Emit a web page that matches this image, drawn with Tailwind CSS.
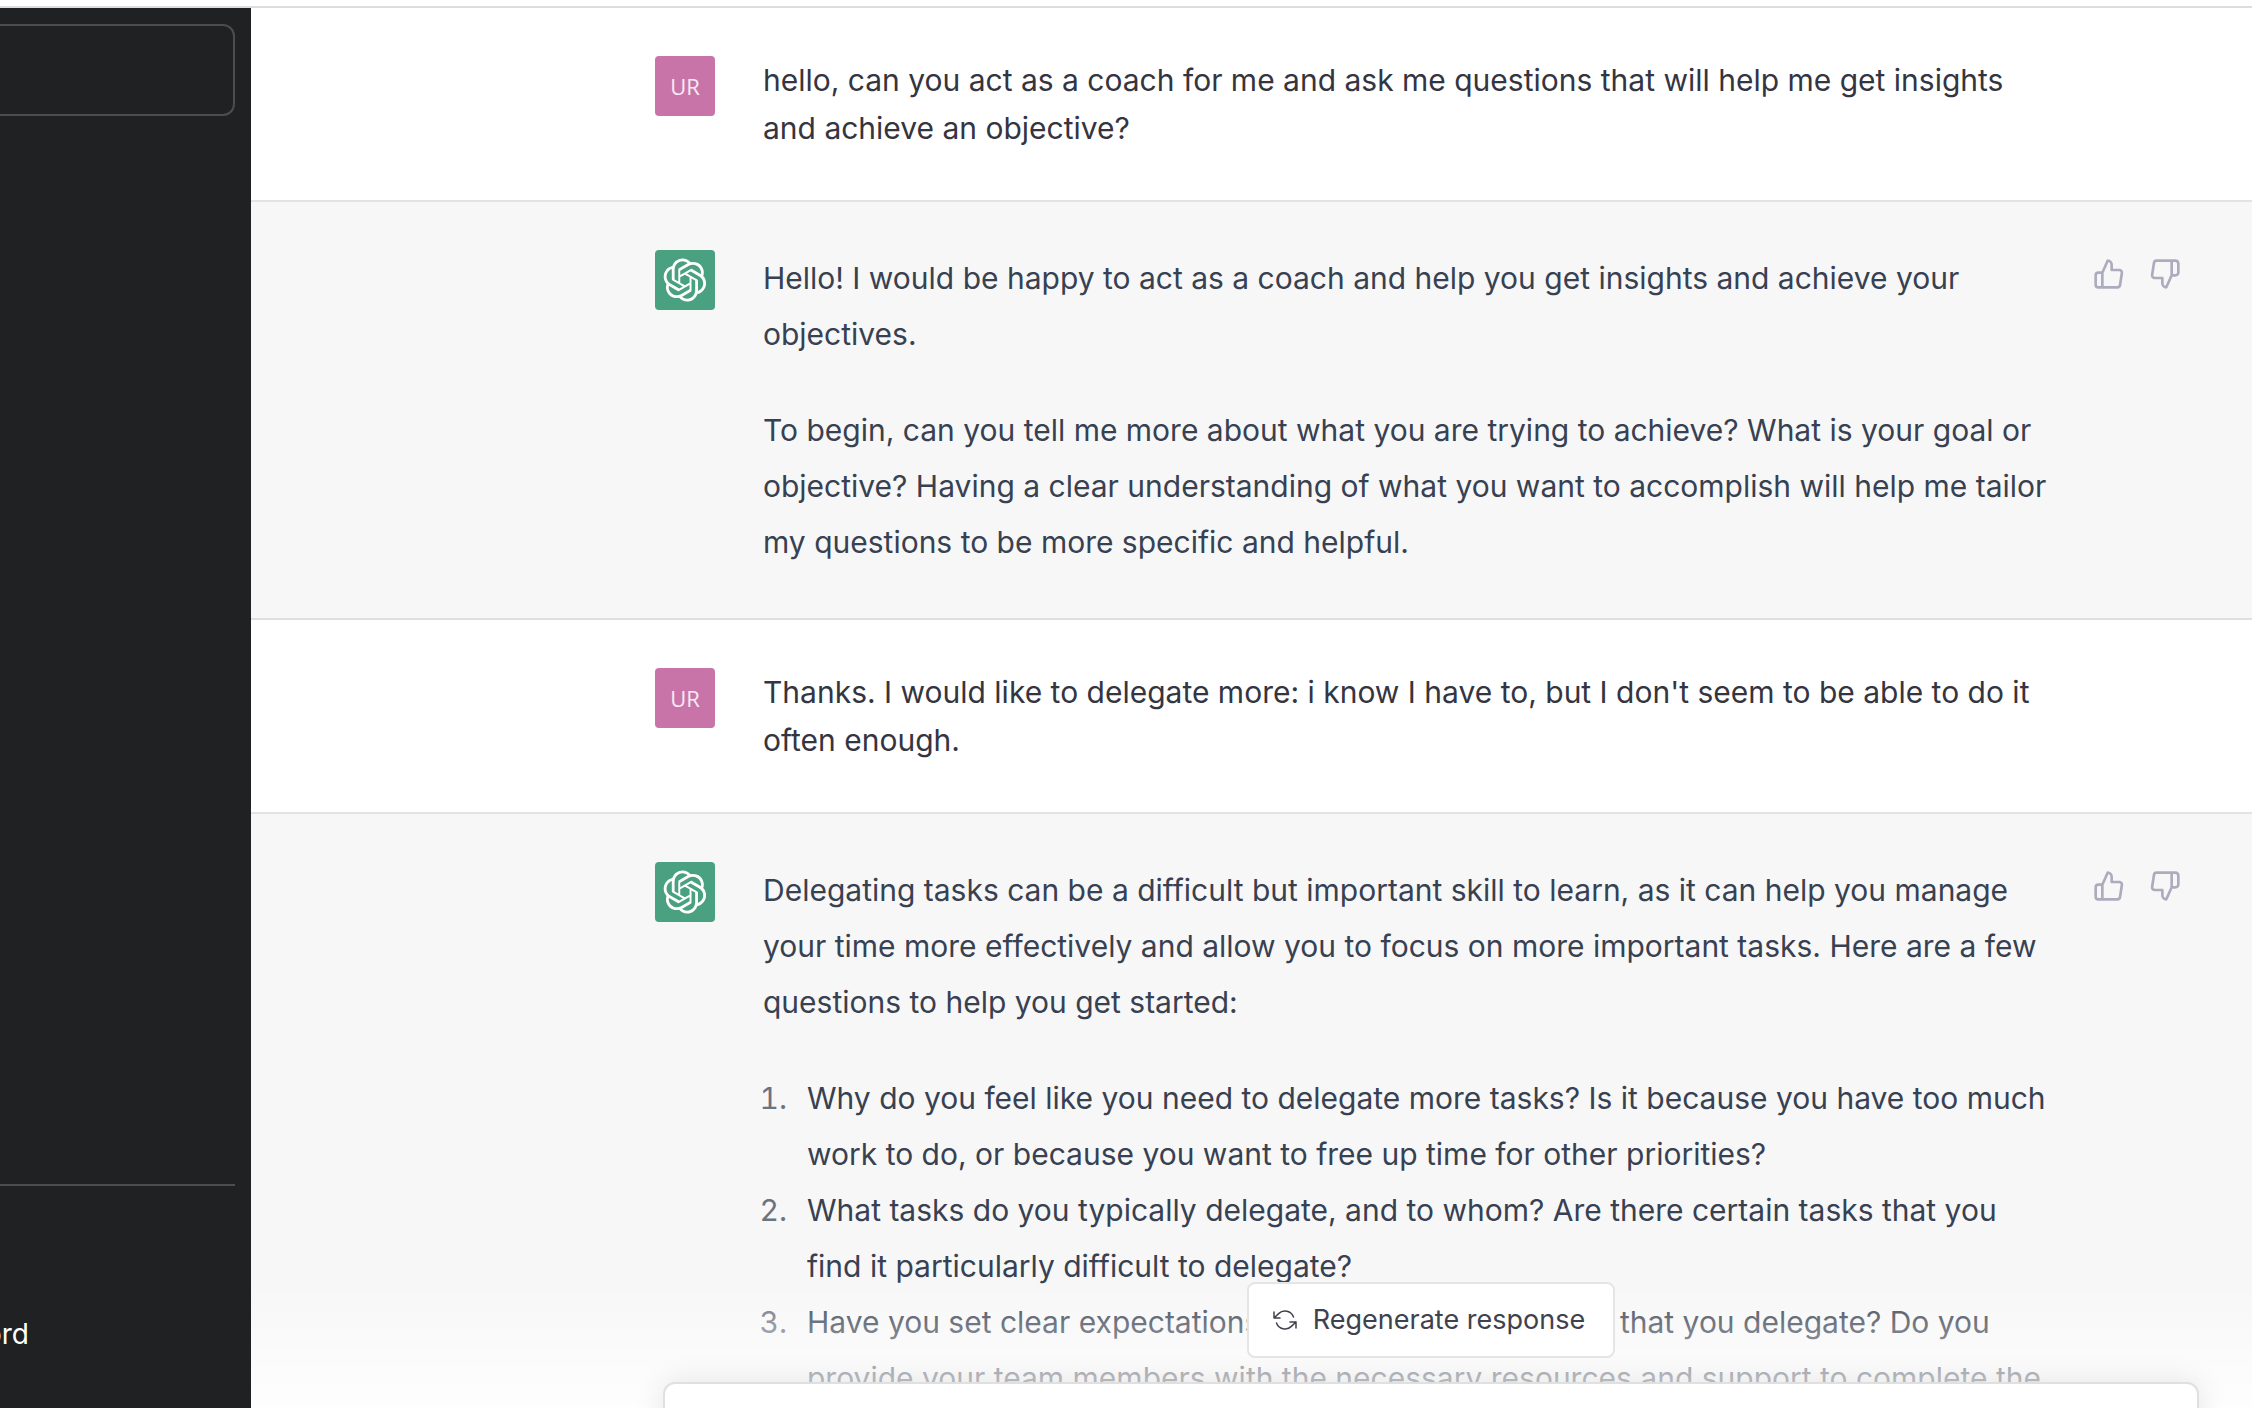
<!DOCTYPE html>
<html lang="en">
<head>
<meta charset="utf-8">
<title>Chat</title>
<script src="https://cdn.jsdelivr.net/npm/@tailwindcss/browser@4"></script>
</head>
<body class="flex h-screen flex-col overflow-hidden bg-white font-['Inter',sans-serif]">
<svg class="hidden" aria-hidden="true">
  <symbol id="logo" viewBox="0 0 41 41"><path fill="currentColor" d="M37.5324 16.8707C37.9808 15.5241 38.1363 14.0974 37.9886 12.6859C37.8409 11.2744 37.3934 9.91076 36.676 8.68622C35.6126 6.83404 33.9882 5.3676 32.0373 4.4985C30.0864 3.62941 27.9098 3.40259 25.8215 3.85078C24.8796 2.7893 23.7219 1.94125 22.4257 1.36341C21.1295 0.785575 19.7249 0.491269 18.3058 0.500197C16.1708 0.495044 14.0893 1.16803 12.3614 2.42214C10.6335 3.67624 9.34853 5.44666 8.6917 7.47815C7.30085 7.76286 5.98686 8.3414 4.8377 9.17505C3.68854 10.0087 2.73073 11.0782 2.02839 12.312C0.956464 14.1591 0.498905 16.2988 0.721698 18.4228C0.944492 20.5467 1.83612 22.5449 3.268 24.1293C2.81966 25.4759 2.66413 26.9026 2.81182 28.3141C2.95951 29.7256 3.40701 31.0892 4.12437 32.3138C5.18791 34.1659 6.8123 35.6322 8.76321 36.5013C10.7141 37.3704 12.8907 37.5973 14.9789 37.1492C15.9208 38.2107 17.0786 39.0587 18.3747 39.6366C19.6709 40.2144 21.0755 40.5087 22.4946 40.4998C24.6307 40.5054 26.7133 39.8321 28.4418 38.5772C30.1704 37.3223 31.4556 35.5506 32.1119 33.5179C33.5027 33.2332 34.8167 32.6547 35.9659 31.821C37.115 30.9874 38.0728 29.9178 38.7752 28.684C39.8458 26.8371 40.3023 24.6979 40.0789 22.5748C39.8556 20.4517 38.9639 18.4544 37.5324 16.8707ZM22.4978 37.8849C20.7443 37.8874 19.0459 37.2733 17.6994 36.1501C17.7601 36.117 17.8666 36.0586 17.936 36.0161L25.9004 31.4156C26.1003 31.3019 26.2663 31.137 26.3813 30.9378C26.4964 30.7386 26.5563 30.5124 26.5549 30.2825V19.0542L29.9213 20.998C29.9389 21.0068 29.9541 21.0198 29.9656 21.0359C29.977 21.052 29.9842 21.0707 29.9867 21.0902V30.3889C29.9842 32.375 29.1946 34.2791 27.7909 35.6841C26.3872 37.0892 24.4838 37.8806 22.4978 37.8849ZM6.39227 31.0064C5.51397 29.4888 5.19742 27.7107 5.49804 25.9832C5.55718 26.0187 5.66048 26.0818 5.73461 26.1244L13.699 30.7248C13.8975 30.8408 14.1233 30.902 14.3532 30.902C14.583 30.902 14.8088 30.8408 15.0073 30.7248L24.731 25.1103V28.9979C24.7321 29.0177 24.7283 29.0376 24.7199 29.0556C24.7115 29.0736 24.6988 29.0893 24.6829 29.1012L16.6317 33.7497C14.9096 34.7416 12.8643 35.0097 10.9447 34.4954C9.02506 33.9811 7.38785 32.7263 6.39227 31.0064ZM4.29707 13.6194C5.17156 12.0998 6.55279 10.9364 8.19885 10.3327C8.19885 10.4013 8.19491 10.5228 8.19491 10.6071V19.808C8.19351 20.0378 8.25334 20.2638 8.36823 20.4629C8.48312 20.6619 8.64893 20.8267 8.84863 20.9404L18.5723 26.5542L15.206 28.4979C15.1894 28.5089 15.1703 28.5155 15.1505 28.5173C15.1307 28.5191 15.1107 28.516 15.0924 28.5082L7.04046 23.8557C5.32135 22.8601 4.06716 21.2235 3.55289 19.3046C3.03862 17.3858 3.30624 15.3413 4.29707 13.6194ZM31.955 20.0556L22.2312 14.4411L25.5976 12.4981C25.6142 12.4872 25.6333 12.4805 25.6531 12.4787C25.6729 12.4769 25.6928 12.4801 25.7111 12.4879L33.7631 17.1364C34.9967 17.849 36.0017 18.8982 36.6606 20.1613C37.3194 21.4244 37.6047 22.849 37.4832 24.2684C37.3617 25.6878 36.8382 27.0432 35.9743 28.1759C35.1103 29.3086 33.9415 30.1717 32.6047 30.6641C32.6047 30.5947 32.6047 30.4733 32.6047 30.3889V21.188C32.6066 20.9586 32.5474 20.7328 32.4332 20.5338C32.319 20.3348 32.154 20.1698 31.955 20.0556ZM35.3055 15.0128C35.2464 14.9765 35.1431 14.9142 35.069 14.8717L27.1045 10.2712C26.906 10.1554 26.6803 10.0943 26.4504 10.0943C26.2206 10.0943 25.9948 10.1554 25.7963 10.2712L16.0726 15.8858V11.9982C16.0715 11.9783 16.0753 11.9585 16.0837 11.9405C16.0921 11.9225 16.1048 11.9068 16.1207 11.8949L24.1719 7.25025C25.4053 6.53903 26.8158 6.19376 28.2383 6.25482C29.6608 6.31589 31.0364 6.78077 32.2044 7.59508C33.3723 8.40939 34.2842 9.53945 34.8334 10.8531C35.3826 12.1667 35.5464 13.6095 35.3055 15.0128ZM14.2424 21.9419L10.8752 19.9981C10.8576 19.9893 10.8423 19.9763 10.8309 19.9602C10.8195 19.9441 10.8122 19.9254 10.8098 19.9058V10.6071C10.8107 9.18295 11.2173 7.78848 11.9819 6.58696C12.7466 5.38544 13.8377 4.42659 15.1275 3.82264C16.4173 3.21869 17.8524 2.99464 19.2649 3.1767C20.6775 3.35876 22.0089 3.93941 23.1034 4.85067C23.0427 4.88379 22.937 4.94215 22.8668 4.98473L14.9024 9.58517C14.7025 9.69878 14.5366 9.86356 14.4215 10.0626C14.3065 10.2616 14.2466 10.4877 14.2479 10.7175L14.2424 21.9419ZM16.071 17.9991L20.4018 15.4978L24.7325 17.9975V22.9985L20.4018 25.4983L16.071 22.9985V17.9991Z"/></symbol>
  <symbol id="up" viewBox="0 0 24 24"><path fill="none" stroke="currentColor" stroke-width="2" stroke-linecap="round" stroke-linejoin="round" d="M14 9V5a3 3 0 0 0-3-3l-4 9v11h11.28a2 2 0 0 0 2-1.7l1.38-9a2 2 0 0 0-2-2.3zM7 22H4a2 2 0 0 1-2-2v-7a2 2 0 0 1 2-2h3"/></symbol>
  <symbol id="down" viewBox="0 0 24 24"><path fill="none" stroke="currentColor" stroke-width="2" stroke-linecap="round" stroke-linejoin="round" d="M10 15v4a3 3 0 0 0 3 3l4-9V2H5.72a2 2 0 0 0-2 1.7l-1.38 9a2 2 0 0 0 2 2.3zm7-13h2.67A2.31 2.31 0 0 1 22 4v7a2.31 2.31 0 0 1-2.33 2H17"/></symbol>
</svg>
<div class="h-2 shrink-0 border-b-2 border-[#dcdcdc]"></div>
<div class="flex min-h-0 flex-1">
  <nav class="flex w-[251px] shrink-0 flex-col bg-[#202123] pt-4 pr-4">
    <button type="button" aria-label="New chat" class="h-[92px] w-full rounded-r-xl border-2 border-l-0 border-[#4d4d4f]"></button>
    <div class="flex-1"></div>
    <div class="h-[224px] border-t-2 border-[#4d4d4f] pt-[128px]">
      <a href="#" class="flex w-[29px] justify-end overflow-hidden text-[28px] leading-10 text-white">Discord</a>
    </div>
  </nav>

  <main class="relative min-w-0 flex-1 overflow-hidden">
    <article class="border-b-2 border-[#e3e3e3] bg-white py-12 pl-[404px]">
      <div class="flex max-w-[1534px] gap-12">
        <div class="flex size-[60px] shrink-0 items-center justify-center rounded-sm bg-[#c974a8] font-['Open_Sans',sans-serif] text-[22px] text-white/85">UR</div>
        <p class="max-w-[1312px] text-[30px] leading-12 text-[#343541]">hello, can you act as a coach for me and ask me questions that will help me get insights<br>and achieve an objective?</p>
      </div>
    </article>

    <article class="border-b-2 border-[#dfdfdf] bg-[#f7f7f7] py-12 pl-[404px]">
      <div class="flex max-w-[1534px] gap-2">
        <div class="mr-10 flex size-[60px] shrink-0 items-center justify-center rounded-sm bg-[#4aa181] text-white"><svg class="size-11"><use href="#logo"/></svg></div>
        <div class="flex min-w-0 flex-1 flex-col gap-10 text-[30px] leading-14 text-[#374151]">
          <p>Hello! I would be happy to act as a coach and help you get insights and achieve your objectives.</p>
          <p>To begin, can you tell me more about what you are trying to achieve? What is your goal or objective? Having a clear understanding of what you want to accomplish will help me tailor my questions to be more specific and helpful.</p>
        </div>
        <div class="flex shrink-0 items-start gap-2 text-[#acacbe]">
          <button type="button" aria-label="Good response" class="p-2"><svg class="size-8"><use href="#up"/></svg></button>
          <button type="button" aria-label="Bad response" class="p-2"><svg class="size-8"><use href="#down"/></svg></button>
        </div>
      </div>
    </article>

    <article class="border-b-2 border-[#e3e3e3] bg-white py-12 pl-[404px]">
      <div class="flex max-w-[1534px] gap-12">
        <div class="flex size-[60px] shrink-0 items-center justify-center rounded-sm bg-[#c974a8] font-['Open_Sans',sans-serif] text-[22px] text-white/85">UR</div>
        <p class="max-w-[1312px] text-[30px] leading-12 text-[#343541]">Thanks. I would like to delegate more: i know I have to, but I don't seem to be able to do it often enough.</p>
      </div>
    </article>

    <article class="bg-[#f7f7f7] py-12 pl-[404px]">
      <div class="flex max-w-[1534px] gap-2">
        <div class="mr-10 flex size-[60px] shrink-0 items-center justify-center rounded-sm bg-[#4aa181] text-white"><svg class="size-11"><use href="#logo"/></svg></div>
        <div class="flex min-w-0 flex-1 flex-col gap-10 text-[30px] leading-14 text-[#374151]">
          <p>Delegating tasks can be a difficult but important skill to learn, as it can help you manage your time more effectively and allow you to focus on more important tasks. Here are a few questions to help you get started:</p>
          <ol class="list-decimal pl-8 marker:text-[#6b7280]">
            <li class="pl-3">Why do you feel like you need to delegate more tasks? Is it because you have too much work to do, or because you want to free up time for other priorities?</li>
            <li class="pl-3">What tasks do you typically delegate, and to whom? Are there certain tasks that you<br>find it particularly difficult to delegate?</li>
            <li class="pl-3">Have you set clear expectations with others for the tasks that you delegate? Do you provide your team members with the necessary resources and support to complete the tasks?</li>
          </ol>
        </div>
        <div class="flex shrink-0 items-start gap-2 text-[#acacbe]">
          <button type="button" aria-label="Good response" class="p-2"><svg class="size-8"><use href="#up"/></svg></button>
          <button type="button" aria-label="Bad response" class="p-2"><svg class="size-8"><use href="#down"/></svg></button>
        </div>
      </div>
    </article>

    <!-- Composer floats over the end of the conversation -->
    <div class="absolute inset-x-0 bottom-0 flex h-[126px] flex-col bg-linear-to-b from-white/0 to-white/85 pl-[412px]">
      <div class="flex w-full max-w-[1536px] flex-col items-center gap-6">
        <button type="button" class="flex h-[76px] items-center gap-4 rounded-lg border-2 border-[#e5e5e5] bg-white px-6 text-[27px] text-[#40414f]">
          <svg class="size-6" viewBox="0 0 24 24" fill="none" stroke="currentColor" stroke-width="1.5" stroke-linecap="round" stroke-linejoin="round"><path d="M1 4v6h6M23 20v-6h-6M20.49 9A9 9 0 0 0 5.64 5.64L1 10m22 4l-4.64 4.36A9 9 0 0 1 3.51 15"/></svg>
          <span class="pr-1">Regenerate response</span>
        </button>
        <textarea aria-label="Message" class="block h-[100px] w-full shrink-0 resize-none rounded-xl border-2 border-[#e0e0e0] bg-white shadow-[0_0_30px_rgba(0,0,0,0.10)] outline-none"></textarea>
      </div>
    </div>
  </main>
</div>
</body>
</html>
